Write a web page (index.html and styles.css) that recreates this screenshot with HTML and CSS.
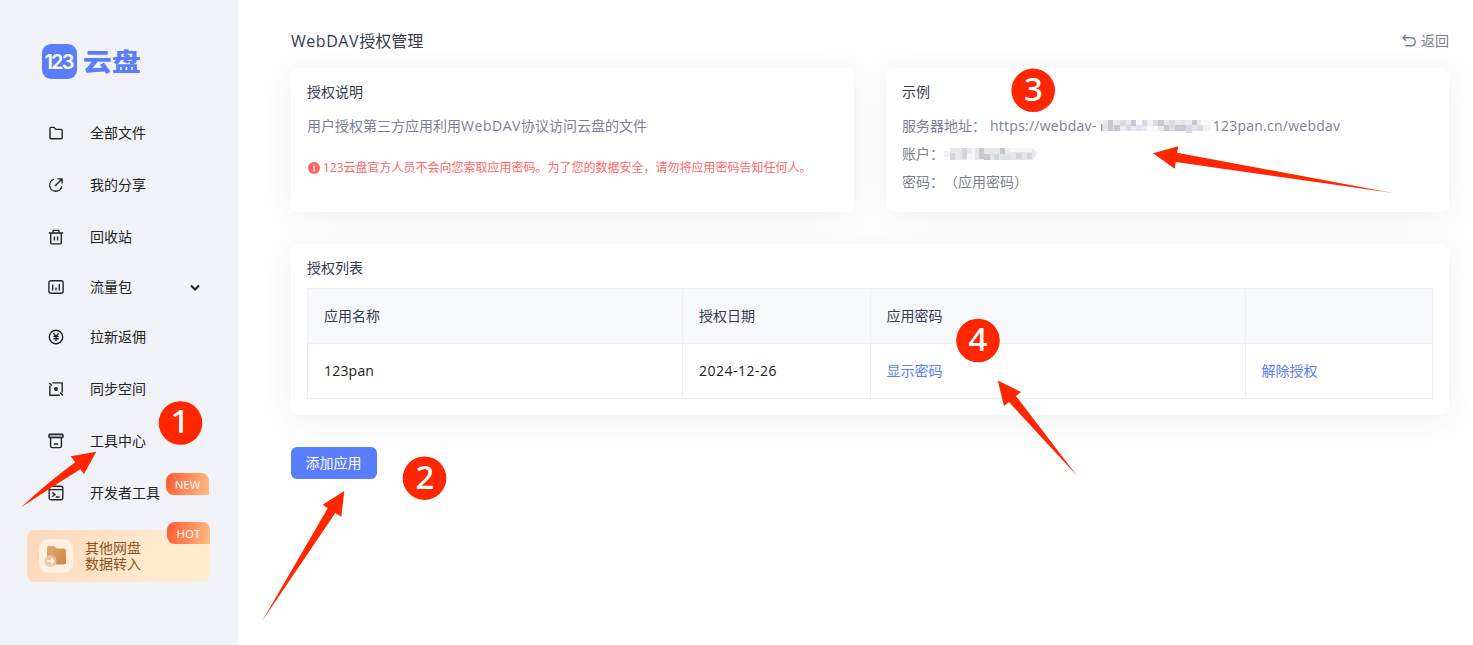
FILE: index.html
```html
<!DOCTYPE html>
<html lang="zh-CN">

<head>
    <meta charset="UTF-8">
    <meta name="viewport" content="width=device-width, initial-scale=1.0">
    <title>WebDAV授权管理</title>
    <link rel="stylesheet" href="styles.css">
</head>

<body>
    <div class="container">
        <aside class="sidebar">
            <div class="logo">
                <div class="logo-mark"><span>123</span></div>
                <div class="logo-name">云盘</div>
            </div>
            <nav class="menu">
                <a class="item">
                    <svg class="icon" viewBox="0 0 16 16"><path d="M2 13V3.2Q2 2.4 2.8 2.4H6L7.8 4.4H13.2Q14.2 4.4 14.2 5.4V12.8Q14.2 13.7 13.2 13.7H2.8Q2 13.7 2 13Z"/></svg>
                    <span>全部文件</span>
                </a>
                <a class="item">
                    <svg class="icon" viewBox="0 0 16 16"><path d="M6.2 2.1A6.2 6.2 0 1 0 13.9 9.5M3.8 3.4L4.6 2.8M7 9L14 2M9.4 1.9H14.1V6.4"/></svg>
                    <span>我的分享</span>
                </a>
                <a class="item">
                    <svg class="icon" viewBox="0 0 16 16"><path d="M.8 4H15.2M4.6 3.8L5.2 1.4H10.8L11.4 3.8M2.7 4V13.4Q2.7 14.9 4.2 14.9H11.8Q13.3 14.9 13.3 13.4V4M6.4 7.6V11.6M9.6 7.6V11.6"/></svg>
                    <span>回收站</span>
                </a>
                <a class="item short">
                    <svg class="icon" viewBox="0 0 16 16"><rect x=".9" y="1.7" width="14.2" height="12.6" rx="2"/><path d="M4.7 5.5V11.4M8 8.4V11.4M11.3 5V11.4"/></svg>
                    <span>流量包</span>
                    <svg class="chevron" viewBox="0 0 12 12"><path d="M2 4.500L6 8.500L10 4.500"/></svg>
                </a>
                <a class="item">
                    <svg class="icon" viewBox="0 0 16 16"><circle cx="8" cy="8" r="6.7"/><path d="M5.4 4.4L8 7.3L10.6 4.4M5.3 7.5H10.7M5.3 9.8H10.7M8 7.3V12"/></svg>
                    <span>拉新返佣</span>
                </a>
                <a class="item">
                    <svg class="icon" viewBox="0 0 16 16"><path d="M4.2 1.9H14.2V11.4M11.8 14.2H1.9V4.6M1.2 1.9L4 4.4M14.8 14.4L12 11.6"/><circle class="dot" cx="8" cy="8" r="2"/></svg>
                    <span>同步空间</span>
                </a>
                <a class="item">
                    <svg class="icon" viewBox="0 0 16 16"><rect class="lid" x=".9" y="1.3" width="14.2" height="3.2" rx="1"/><path d="M2.6 4.6V13Q2.6 14.6 4.2 14.6H11.8Q13.4 14.6 13.4 13V4.6M5.9 11H10.1"/></svg>
                    <span>工具中心</span>
                </a>
                <a class="item">
                    <svg class="icon" viewBox="0 0 16 16"><rect x="1.2" y="1.2" width="13.6" height="13.6" rx="2"/><path d="M1.2 4.6H14.8M4.2 7.4L7 9.6L4.2 11.8M7.8 12H11.6"/></svg>
                    <span>开发者工具</span>
                    <em class="tag new">NEW</em>
                </a>
            </nav>
            <div class="transfer">
                <div class="transfer-icon">
                    <svg viewBox="0 0 34 34">
                        <defs>
                            <linearGradient id="folder" x1="0" y1="0" x2="1" y2="1">
                                <stop offset="0" stop-color="#e3ab72"/>
                                <stop offset="1" stop-color="#cd8440"/>
                            </linearGradient>
                        </defs>
                        <path fill="url(#folder)" d="M8 9Q8 7 10 7H15L18 9.5H24.500Q27 9.500 27 12V23Q27 25.500 24.500 25.500H10.500Q8 25.500 8 23Z"/>
                        <circle cx="11.500" cy="22" r="6" fill="#ecc9a5" fill-opacity=".85"/>
                        <path d="M8 22H14.500M12 19.300L14.700 22L12 24.700" fill="none" stroke="#fff" stroke-width="1.500"/>
                    </svg>
                </div>
                <div class="transfer-text">其他网盘<br>数据转入</div>
                <em class="tag hot">HOT</em>
            </div>
        </aside>

        <main class="content">
            <header class="header">
                <h1><span class="latin">WebDAV</span>授权管理</h1>
                <a class="back">
                    <svg viewBox="0 0 16 16"><path d="M5 1.800L2 4.800L5 7.800M2.200 4.800H10.200Q14.200 4.800 14.200 8.800Q14.200 12.800 10.200 12.800H4.400"/></svg>
                    <span>返回</span>
                </a>
            </header>

            <div class="cards">
                <section class="card">
                    <h2>授权说明</h2>
                    <p class="desc">用户授权第三方应用利用<span class="latin">WebDAV</span>协议访问云盘的文件</p>
                    <p class="warning">
                        <svg viewBox="0 0 12 12"><circle cx="6" cy="6" r="6"/><path d="M5 5H6.300V9M4.800 9H7.600M6 2.400V3.700"/></svg>
                        <span>123云盘官方人员不会向您索取应用密码。为了您的数据安全，请勿将应用密码告知任何人。</span>
                    </p>
                </section>
                <section class="card">
                    <h2>示例</h2>
                    <div class="row">
                        <span class="label">服务器地址：</span>
                        <span class="url">https://webdav-</span>
                        <svg class="mosaic long" viewBox="0 0 116 16">
                            <path fill="#e9e9ef" d="M5 2h108v11H5z"/>
                            <path fill="#c9c8d1" d="M11 2h5v11h-5zM17 7h6v6h-6zM34 2h5v6h-5zM61 2h6v6h-6zM67 7h5v6h-5zM78 7h11v6H78zM95 2h5v11h-5z"/>
                            <path fill="#d9dae4" d="M23 2h6v6h-6zM29 7h5v6h-5zM45 2h5v6h-5zM56 2h5v6h-5zM72 2h6v11h-6zM89 7h6v8h-6zM100 7h6v6h-6z"/>
                            <path fill="#dfe5f0" d="M6 7h5v6H6zM39 7h6v6h-6zM84 2h5v5h-5zM95 7h5v6h-5z"/>
                            <path fill="#f6efec" d="M0 2h6v5H0zM50 2h6v6h-6zM106 7h6v6h-6z"/>
                            <path fill="#fafafc" d="M39 2h6v5h-6zM50 8h11v6H50zM104 2h10v5h-10z"/>
                            <path fill="#a2a3b0" d="M4 6h1.500v7H4z"/>
                        </svg>
                        <span class="url">123pan.cn/webdav</span>
                    </div>
                    <div class="row">
                        <span class="label">账户：</span>
                        <svg class="mosaic" viewBox="0 0 94 16">
                            <path fill="#e6e6ec" d="M6 2h82l5 5-4 7H6z"/>
                            <path fill="#f1f1f5" d="M0 5h6v6H0z"/>
                            <path fill="#d4d4da" d="M6 7h5v7H6zM18 2h5v11h-5zM50 8h5v6h-5zM72 7h6v6h-6zM83 7h5v6h-5z"/>
                            <path fill="#c8c6cf" d="M35 2h5v11h-5zM40 8h6v6h-6zM56 2h5v6h-5z"/>
                            <path fill="#dce4ee" d="M46 7h4v7h-4zM56 8h10v6H56z"/>
                            <path fill="#f3e8e4" d="M61 2h5v6h-5z"/>
                            <path fill="#f6f6f9" d="M28 2h3v12h-3zM23 8h5v6h-5zM66 2h22v4H66z"/>
                        </svg>
                    </div>
                    <div class="row">
                        <span class="label">密码：</span>
                        <span>（应用密码）</span>
                    </div>
                </section>
            </div>

            <section class="card list">
                <h2>授权列表</h2>
                <table>
                    <thead>
                        <tr>
                            <th class="wide">应用名称</th>
                            <th>授权日期</th>
                            <th class="wide">应用密码</th>
                            <th></th>
                        </tr>
                    </thead>
                    <tbody>
                        <tr>
                            <td class="name">123pan</td>
                            <td class="date">2024-12-26</td>
                            <td><a>显示密码</a></td>
                            <td><a>解除授权</a></td>
                        </tr>
                    </tbody>
                </table>
            </section>

            <button class="add">添加应用</button>
        </main>
    </div>

    <!-- numbered steps and arrows -->
    <svg class="steps" viewBox="0 0 1473 645">
        <path d="M96.300 451.700L70.700 456.300L75.300 462.300Q48 482 21.300 507.300Q52 487 80.300 469.300L84 474Z"/>
        <path d="M344.300 491L322.700 504.700L327.700 508.300L262 621.300L335.300 513L341.300 516.700Z"/>
        <path d="M1153 153.300L1178.300 146.300L1177 152.700L1391.700 192.700L1175.700 162L1174.700 168.700Z"/>
        <path d="M997.800 380.500L1021 392L1016 396L1077 475.700L1008.900 402L1003.900 406Z"/>
        <circle cx="180.500" cy="423" r="21.800"/>
        <circle cx="424.500" cy="478.200" r="21.800"/>
        <circle cx="1033.200" cy="90.300" r="21.800"/>
        <circle cx="978" cy="340.500" r="21.800"/>
        <text x="180" y="433">1</text>
        <text x="425" y="488.500">2</text>
        <text x="1033.500" y="100.500">3</text>
        <text x="978" y="350.500">4</text>
    </svg>
</body>

</html>
```
FILE: styles.css
```css
* {
    box-sizing: border-box;
}

body {
    margin: 0;
    background-color: #fefefe;
    color: #222;
    font-family: "Open Sans", "Noto Sans CJK SC", sans-serif;
    font-size: 14px;
    line-height: 20px;
}

h1,
h2,
p {
    margin: 0;
    font-weight: 400;
}

svg {
    display: block;
    flex-shrink: 0;
}

.container {
    display: flex;
    height: 645px;
}

/* sidebar */
.sidebar {
    width: 238px;
    flex-shrink: 0;
    background-color: #f0f2f7;
}

.logo {
    display: flex;
    align-items: center;
    gap: 6px;
    padding: 44px 0 0 42px;
    color: #597dfc;
}

.logo-mark {
    display: flex;
    justify-content: center;
    align-items: center;
    width: 35px;
    height: 35px;
    border-radius: 9px;
    background-color: #597dfc;
    color: white;
    font-family: Inter, sans-serif;
    font-size: 20px;
    font-weight: 600;
    letter-spacing: -1.8px;
}

.logo-mark span {
    margin-left: -2px;
}

.logo-name {
    font-size: 29px;
    font-weight: 900;
    line-height: 35px;
    transform: scaleY(0.86);
}

.menu {
    padding-top: 28px;
}

.item {
    display: flex;
    align-items: center;
    height: 52px;
    padding-left: 48px;
}

.item.short {
    height: 48px;
}

.icon {
    width: 16px;
    height: 16px;
    margin-right: 26px;
    fill: none;
    stroke: #23232f;
    stroke-width: 1.4;
}

.icon .dot {
    fill: #23232f;
    stroke: none;
}

.icon .lid {
    fill: #b9bac2;
}

.chevron {
    width: 12px;
    height: 12px;
    margin-left: 57px;
    fill: none;
    stroke: #222;
    stroke-width: 2;
}

.tag {
    width: 43px;
    height: 22px;
    border-radius: 8px 8px 0 8px;
    background: linear-gradient(100deg, #ff5b2e, #ffbb85);
    color: white;
    font-size: 11.500px;
    font-style: normal;
    font-weight: 500;
    line-height: 23px;
    text-align: center;
}

.tag.new {
    margin: -18px 0 0 6px;
}

.transfer {
    position: relative;
    display: flex;
    align-items: center;
    width: 183px;
    height: 52px;
    margin: 11px 0 0 27px;
    padding-left: 12px;
    border-radius: 8px;
    background: linear-gradient(110deg, #ffd7bd, #ffecce 75%);
}

.transfer-icon {
    width: 34px;
    height: 34px;
    margin-right: 12px;
    border-radius: 9px;
    background-color: #fff0e2;
}

.transfer-text {
    color: #89531f;
    line-height: 16px;
}

.tag.hot {
    position: absolute;
    top: -8px;
    right: 0;
}

/* main column */
.content {
    flex: 1;
    padding: 0 24px 0 53px;
}

.header {
    display: flex;
    justify-content: space-between;
    align-items: center;
    height: 68px;
    padding-top: 14px;
}

.header h1 {
    color: #353a50;
    font-size: 16px;
}

.latin {
    letter-spacing: 0.55px;
}

.back {
    display: flex;
    align-items: center;
    gap: 4px;
    color: #7c7f91;
}

.back svg {
    width: 16px;
    height: 16px;
    fill: none;
    stroke: #7c7f91;
    stroke-width: 1.4;
}

.cards {
    display: grid;
    grid-template-columns: 1fr 1fr;
    gap: 32px;
}

.card {
    height: 144px;
    padding: 14px 16px;
    border-radius: 8px;
    background-color: white;
    box-shadow: 0 4px 30px rgba(50, 60, 110, 0.07);
}

.card h2 {
    color: #353a50;
    font-size: 14px;
    line-height: 20px;
}

.desc {
    margin-top: 14px;
    color: #7c7f91;
}

.warning {
    display: flex;
    align-items: center;
    gap: 3px;
    margin-top: 22px;
    padding-left: 1px;
    color: #ff6767;
    font-size: 12px;
}

.warning svg {
    width: 12px;
    height: 12px;
    fill: #ff6767;
}

.warning path {
    fill: none;
    stroke: #ffdada;
    stroke-width: 1.2;
}

.row {
    display: flex;
    align-items: center;
    height: 28px;
    color: #7c7f91;
}

h2 + .row {
    margin-top: 10px;
}

.url {
    letter-spacing: 0.25px;
    white-space: nowrap;
}

.label + .url {
    margin-left: 4px;
}

.mosaic {
    width: 94px;
    height: 16px;
    filter: blur(0.4px);
}

.mosaic.long {
    width: 116px;
}

.list {
    height: 171px;
    margin-top: 32px;
}

table {
    width: 1126px;
    margin-top: 10px;
    border-collapse: collapse;
    table-layout: fixed;
}

th,
td {
    height: 55px;
    padding: 0 16px;
    border: 1px solid #efeff2;
    font-weight: 400;
    text-align: left;
}

th {
    background-color: #f7f8fc;
    color: #353a50;
}

th.wide {
    width: 375px;
}

td a {
    color: #597dfc;
}

.name {
    letter-spacing: 0.2px;
}

.date {
    letter-spacing: 0.5px;
}

.add {
    display: block;
    width: 86px;
    height: 32px;
    margin-top: 32px;
    padding: 0 1px 2px 0;
    border: none;
    border-radius: 6px;
    background-color: #597dfc;
    color: white;
    font-family: inherit;
    font-size: 14px;
}

/* steps drawn over the page */
.steps {
    position: absolute;
    top: 0;
    left: 0;
    width: 1473px;
    height: 645px;
    fill: #ff2600;
    pointer-events: none;
}

.steps text {
    fill: white;
    font-family: "Noto Sans", sans-serif;
    font-size: 33px;
    font-weight: 500;
    text-anchor: middle;
}
```
